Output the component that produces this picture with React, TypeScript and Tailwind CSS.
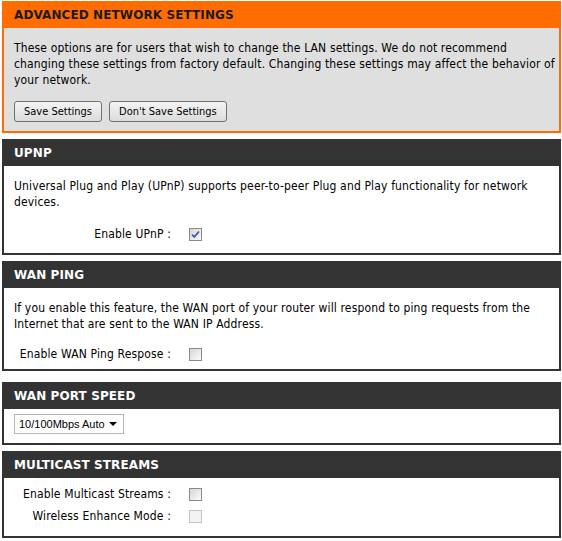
import React from "react";

const body = "font-['DejaVu_Sans_Condensed','DejaVu_Sans',sans-serif] text-[12px] leading-4 tracking-[0.15px] text-black";
const head = "font-['DejaVu_Sans',sans-serif] text-[12px] font-bold tracking-[0.1px]";
const btn =
  "h-[21px] rounded-[3px] border border-[#707070] bg-gradient-to-b from-[#f4f4f4] to-[#dcdcdc] px-[9px] text-[11px] tracking-normal";

function Check({ on, disabled }: { on?: boolean; disabled?: boolean }) {
  return (
    <span
      className={
        "inline-flex h-[13px] w-[13px] items-center justify-center border " +
        (disabled
          ? "border-[#c3c3c3] bg-[#f3f3f3]"
          : "border-[#8a8a8a] bg-gradient-to-br from-[#d6d6d6] to-[#fbfbfb]")
      }
    >
      {on && (
        <svg width="9" height="9" viewBox="0 0 9 9">
          <path d="M1 4.5 L3.3 7 L8 1.5" fill="none" stroke="#3d57a3" strokeWidth="1.8" />
        </svg>
      )}
    </span>
  );
}

function Row({ label, children }: { label: string; children: React.ReactNode }) {
  return (
    <div className="flex h-5 items-center">
      <span className="w-[157px] whitespace-nowrap text-right">{label}</span>
      <span className="ml-[18px] flex">{children}</span>
    </div>
  );
}

function Section({ title, children, className }: { title: string; children: React.ReactNode; className?: string }) {
  return (
    <section>
      <div className={"flex h-[27px] items-center bg-[#333333] px-[12px] text-white " + head}>{title}</div>
      <div className={"border-2 border-t-0 border-[#333333] bg-white px-[10px] " + (className ?? "")}>{children}</div>
    </section>
  );
}

export default function App() {
  return (
    <div className={"h-[541px] w-[562px] bg-white pl-[2px] pt-px " + body}>
      <div className="flex w-[559px] flex-col gap-[6px]">
        <section>
          <div className={"flex h-[27px] items-center bg-[#ff6c00] px-[12px] text-[#1a1a1a] " + head}>
            ADVANCED NETWORK SETTINGS
          </div>
          <div className="border-2 border-t-0 border-[#ff6c00] bg-[#dfdfdf] pb-[9px] pl-[10px] pr-[4px] pt-[12px]">
            <p>
              These options are for users that wish to change the LAN settings. We do not recommend changing these
              settings from factory default. Changing these settings may affect the behavior of your network.
            </p>
            <div className="mt-[13px] flex gap-[7px]">
              <button className={btn}>Save Settings</button>
              <button className={btn}>Don't Save Settings</button>
            </div>
          </div>
        </section>

        <Section title="UPNP" className="pb-[9px] pt-[12px]">
          <p>Universal Plug and Play (UPnP) supports peer-to-peer Plug and Play functionality for network devices.</p>
          <div className="mt-[14px]">
            <Row label="Enable UPnP :">
              <Check on />
            </Row>
          </div>
        </Section>

        <Section title="WAN PING" className="pb-[5px] pt-[12px]">
          <p>
            If you enable this feature, the WAN port of your router will respond to ping requests from the Internet
            that are sent to the WAN IP Address.
          </p>
          <div className="mt-[12px]">
            <Row label="Enable WAN Ping Respose :">
              <Check />
            </Row>
          </div>
        </Section>

        <div className="mt-[5px]">
          <Section title="WAN PORT SPEED" className="pb-[9px] pt-[5px]">
            <div className="flex h-[20px] w-[110px] items-center justify-between border border-[#b5b5b5] bg-white pl-[4px] pr-[6px] font-['Liberation_Sans',sans-serif] text-[11px] tracking-normal whitespace-nowrap">
              <span>10/100Mbps Auto</span>
              <svg width="8" height="4" viewBox="0 0 8 4">
                <path d="M0 0 H8 L4 4 Z" fill="#000" />
              </svg>
            </div>
          </Section>
        </div>

        <Section title="MULTICAST STREAMS" className="pb-[10px] pt-[6px]">
          <Row label="Enable Multicast Streams :">
            <Check />
          </Row>
          <div className="mt-[2px]">
            <Row label="Wireless Enhance Mode :">
              <Check disabled />
            </Row>
          </div>
        </Section>
      </div>
    </div>
  );
}
